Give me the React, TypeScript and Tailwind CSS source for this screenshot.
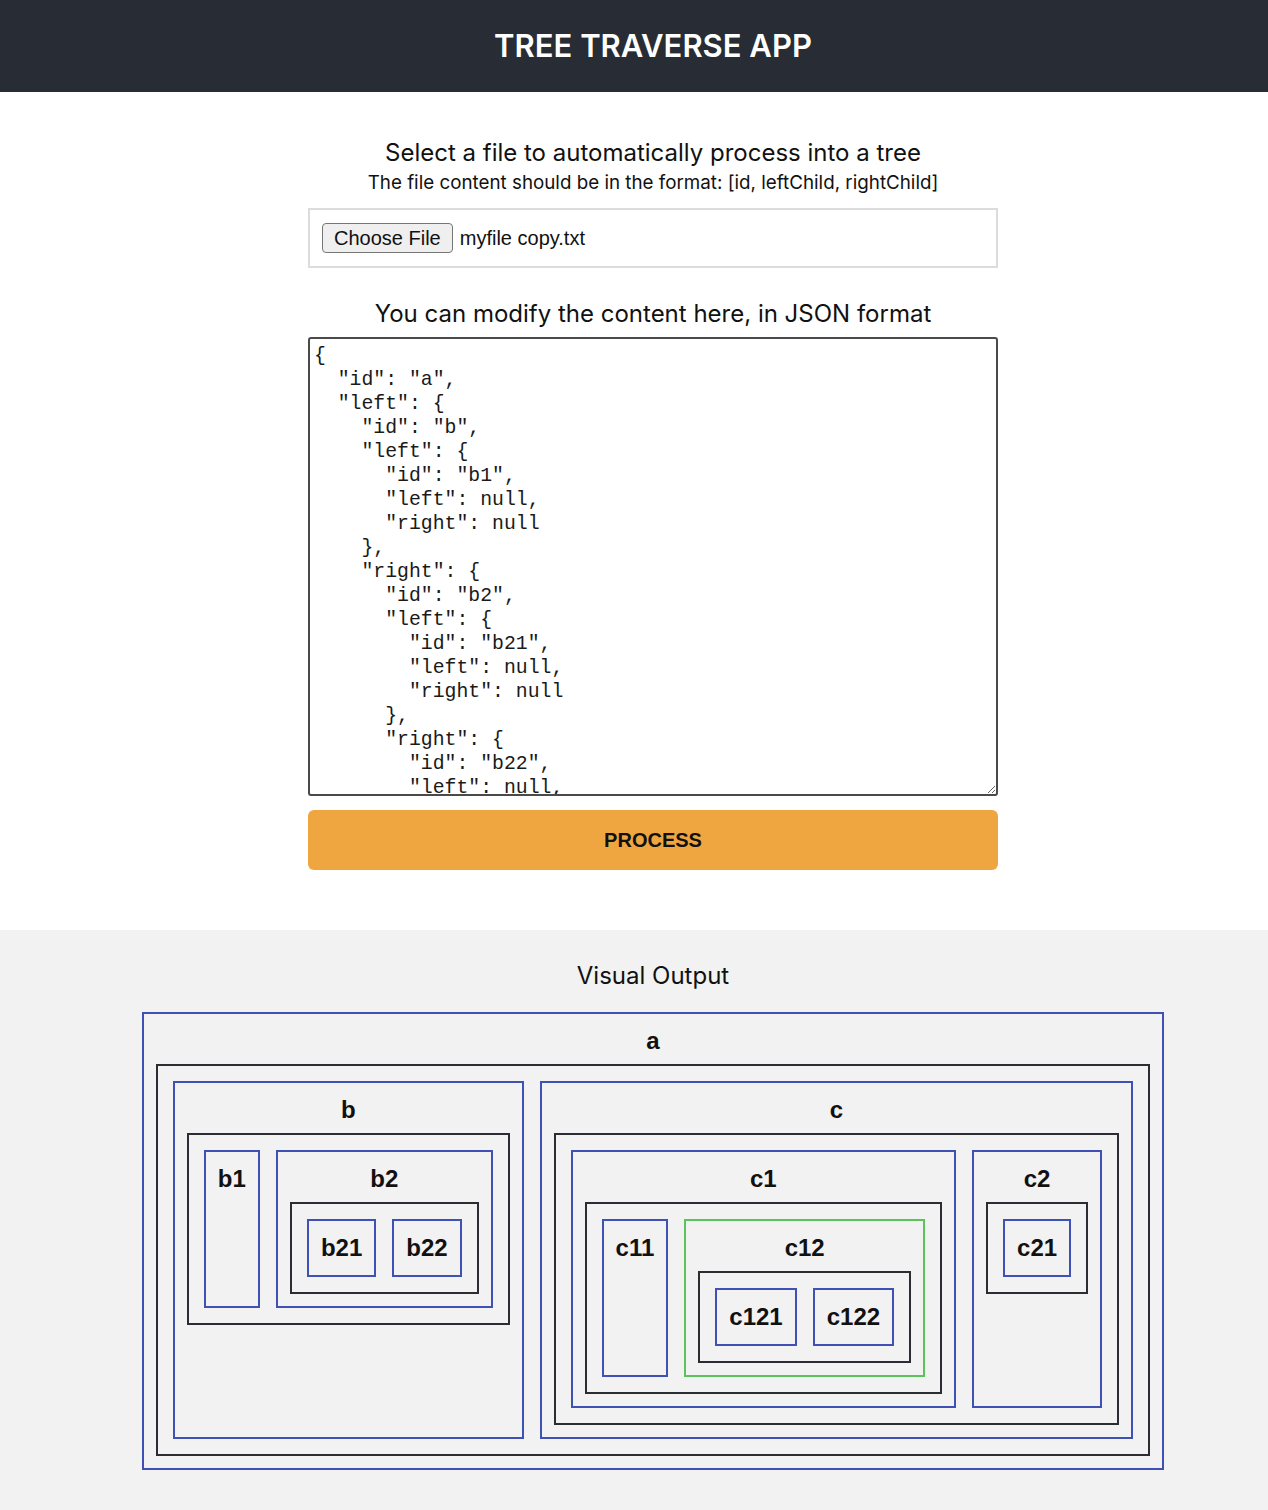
type TreeNode = {
  id: string;
  left: TreeNode | null;
  right: TreeNode | null;
};

const leaf = (id: string): TreeNode => ({ id, left: null, right: null });

const tree: TreeNode = {
  id: "a",
  left: {
    id: "b",
    left: leaf("b1"),
    right: { id: "b2", left: leaf("b21"), right: leaf("b22") },
  },
  right: {
    id: "c",
    left: {
      id: "c1",
      left: leaf("c11"),
      right: { id: "c12", left: leaf("c121"), right: leaf("c122") },
    },
    right: { id: "c2", left: leaf("c21"), right: null },
  },
};

// the node that gets the green outline in the output
const highlighted = "c12";

function Node({ node }: { node: TreeNode }) {
  const kids = [node.left, node.right].filter(Boolean) as TreeNode[];
  return (
    <div
      className={
        node.id === highlighted
          ? "flex flex-col border-2 border-[#5cc35c] p-3"
          : "flex flex-col border-2 border-[#3f51b5] p-3"
      }
    >
      <div className="text-center font-['Liberation_Sans',Arial,sans-serif] text-[24px] font-bold leading-[30px] text-[#111]">
        {node.id}
      </div>
      {kids.length > 0 && (
        <div className="mt-2 flex justify-center gap-4 border-2 border-[#2b2d33] p-[15px]">
          {kids.map((k) => (
            <Node key={k.id} node={k} />
          ))}
        </div>
      )}
    </div>
  );
}

export default function App() {
  return (
    <div className="min-h-screen w-full overflow-hidden bg-[#f2f2f2] font-['Inter',sans-serif] text-[#111]">
      <div className="w-[1306px]">
        <header className="flex h-[92px] items-center justify-center bg-[#282c34]">
          <h1 className="text-[31px] font-semibold text-white">TREE TRAVERSE APP</h1>
        </header>

        <section className="flex flex-col items-center bg-white pt-[46px] pb-[60px]">
          <p className="text-[24px] leading-[30px]">
            Select a file to automatically process into a tree
          </p>
          <p className="mt-[3px] text-[18.8px] leading-[24px]">
            The file content should be in the format: [id, leftChild, rightChild]
          </p>

          <div className="mt-[13px] flex h-[60px] w-[690px] items-center border-2 border-[#dcdcdc] px-3 font-['Liberation_Sans',Arial,sans-serif] text-[20px]">
            <span className="flex h-[30px] items-center rounded-[4px] border border-[#767676] bg-[#efefef] px-[11px]">
              Choose File
            </span>
            <span className="ml-[7px]">myfile copy.txt</span>
          </div>

          <p className="mt-[31px] text-[24px] leading-[30px]">
            You can modify the content here, in JSON format
          </p>
          <textarea
            className="mt-[8px] h-[459px] w-[690px] overflow-hidden rounded-[3px] border-2 border-[#4a4a4a] px-[4px] pt-[5px] pb-[1px] font-['Liberation_Mono',monospace] text-[19.8px] leading-[24px] text-[#1a1a1a]"
            defaultValue={JSON.stringify(tree, null, 2)}
            spellCheck={false}
          />

          <button className="mt-[14px] h-[60px] w-[690px] rounded-md bg-[#efa640] font-['Liberation_Sans',Arial,sans-serif] text-[20px] font-bold text-[#111]">
            PROCESS
          </button>
        </section>

        <section className="flex flex-col items-center bg-[#f2f2f2] pt-[31px] pb-[40px]">
          <h2 className="text-[24px] leading-[30px]">Visual Output</h2>
          <div className="mt-[21px] flex justify-center">
            <Node node={tree} />
          </div>
        </section>
      </div>
    </div>
  );
}
